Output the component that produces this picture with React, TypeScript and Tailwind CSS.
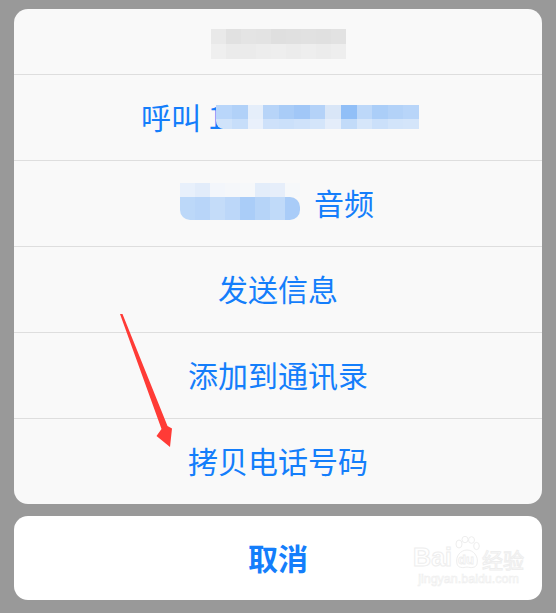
const headerCells = [
  ['#e9e9e9', '#e1e1e1', '#e4e4e4', '#e3e3e3', '#dfdfdf', '#e0e0e0', '#e1e1e1', '#e0e0e0', '#e2e2e2'],
  ['#efefef', '#ebebeb', '#ebebeb', '#ededed', '#eeeeee', '#ececec', '#eeeeee', '#ececec', '#eeeeee'],
];

const phoneCells = [
  ['#b9d6fa', '#b1d1f8', '#e5eefa', '#b7d4f8', '#a9ccf7', '#a1c7f7', '#b4d2f8', '#d9e6f7', '#91bff7', '#bdd8f9', '#abcef8', '#b3d2f8', '#b8d5f9'],
  ['#d0e3fa', '#c7defa', '#e9f0fb', '#cee1fa', '#cbe0fa', '#cfe2fa', '#d4e5fa', '#e4edfa', '#c2dbf9', '#d6e6fa', '#cbe0fa', '#d2e4fa', '#d4e5fa'],
];

const nameTop = ['#e8f0fb', '#e2ecfa', '#f3f6fb', '#f5f7fa', '#f6f8fa', '#e3edfa', '#e6eefa', '#f6f8fa'];
const nameBottom = ['#bcd8f9', '#b8d5f9', '#c4dcf9', '#bcd7f9', '#aacdf8', '#b6d4f8', '#c0daf9', '#a9ccf8'];

const blue = 'text-[#147efb]';

function Row({ children }: { children: React.ReactNode }) {
  return (
    <div className="h-[86px] border-t border-[#dedede] flex items-center justify-center pb-[3px]">
      {children}
    </div>
  );
}

export default function App() {
  return (
    <div
      className="relative w-[556px] h-[613px] bg-[#999999] px-[14px] pt-[9px] overflow-hidden"
      style={{ fontFamily: '"Noto Sans CJK SC", "Noto Sans", sans-serif' }}
    >
      <div className="rounded-[14px] bg-[#f9f9f9] overflow-hidden">
        {/* title, blurred */}
        <div className="h-[65px] flex items-center justify-center">
          <div className="flex flex-col mt-[5px]">
            {headerCells.map((row, i) => (
              <div key={i} className="flex">
                {row.map((c, j) => (
                  <div key={j} className="w-[15px] h-[15px]" style={{ background: c }} />
                ))}
              </div>
            ))}
          </div>
        </div>

        <Row>
          <div className="flex items-center ml-[4px]">
            <span className={`${blue} text-[30px] leading-none`}>呼叫 1</span>
            <div className="flex flex-col ml-[-8px] mt-[1px]">
              {phoneCells.map((row, i) => (
                <div key={i} className="flex">
                  {row.map((c, j) => (
                    <div
                      key={j}
                      className={`w-[15.6px] ${i === 0 ? 'h-[14px]' : 'h-[10px]'} ${i === 1 && j === 0 ? 'rounded-bl-[8px]' : ''}`}
                      style={{ background: c }}
                    />
                  ))}
                </div>
              ))}
            </div>
          </div>
        </Row>

        <Row>
          <div className="flex items-center ml-[-2px]">
            <div className="flex flex-col mt-[-2px]">
              <div className="flex">
                {nameTop.map((c, j) => (
                  <div key={j} className="w-[15px] h-[14px]" style={{ background: c }} />
                ))}
              </div>
              <div className="flex rounded-bl-[10px] rounded-r-[10px] overflow-hidden">
                {nameBottom.map((c, j) => (
                  <div key={j} className="w-[15px] h-[23px]" style={{ background: c }} />
                ))}
              </div>
            </div>
            <span className={`${blue} text-[30px] leading-none ml-[14px]`}>音频</span>
          </div>
        </Row>

        <Row>
          <span className={`${blue} text-[30px] leading-none`}>发送信息</span>
        </Row>
        <Row>
          <span className={`${blue} text-[30px] leading-none`}>添加到通讯录</span>
        </Row>
        <Row>
          <span className={`${blue} text-[30px] leading-none`}>拷贝电话号码</span>
        </Row>
      </div>

      <div className="relative mt-[12px] h-[84px] rounded-[14px] bg-white flex items-center justify-center pb-[2px]">
        <span className={`${blue} text-[30px] font-bold leading-none`}>取消</span>

        {/* watermark */}
        <div className="absolute right-[18px] top-[20px] flex flex-col items-center select-none">
          <div className="flex items-end" style={{ fontFamily: '"Liberation Sans", "Noto Sans CJK SC", sans-serif' }}>
            <span className="text-[25px] font-bold leading-none text-transparent [-webkit-text-stroke:1px_#eeeeee]">Bai</span>
            <div className="relative mx-[1px]">
              <svg width="28" height="34" viewBox="0 0 28 34" className="block">
                <g fill="none" stroke="#eeeeee" strokeWidth="1">
                  <ellipse cx="6" cy="8" rx="3" ry="4" />
                  <ellipse cx="12" cy="3.5" rx="3" ry="3.2" />
                  <ellipse cx="18.5" cy="4" rx="3" ry="3.3" />
                  <ellipse cx="23.5" cy="10" rx="2.8" ry="3.6" />
                  <path d="M4 28 C2 20 8 14 14 14 C20 14 26 20 24 28 C23 32 18 32 14 31 C10 32 5 32 4 28 Z" />
                </g>
              </svg>
              <span className="absolute left-[5px] bottom-[4px] text-[13px] leading-none font-bold text-transparent [-webkit-text-stroke:0.8px_#eeeeee]">du</span>
            </div>
            <span className="text-[21px] leading-none text-transparent [-webkit-text-stroke:1px_#eeeeee]" style={{ fontFamily: '"Noto Sans CJK SC", sans-serif' }}>经验</span>
          </div>
          <span className="text-[12.5px] leading-none mt-[3px] text-transparent [-webkit-text-stroke:0.6px_#eeeeee]" style={{ fontFamily: '"Liberation Sans", sans-serif' }}>
            jingyan.baidu.com
          </span>
        </div>
      </div>

      {/* red annotation arrow */}
      <svg className="absolute left-0 top-0 pointer-events-none" width="556" height="613" viewBox="0 0 556 613">
        <polygon
          points="120,314 122.5,314 167.5,426 172,428.5 170,447 156.5,436 161.5,429"
          fill="#ff3b36"
        />
      </svg>
    </div>
  );
}
